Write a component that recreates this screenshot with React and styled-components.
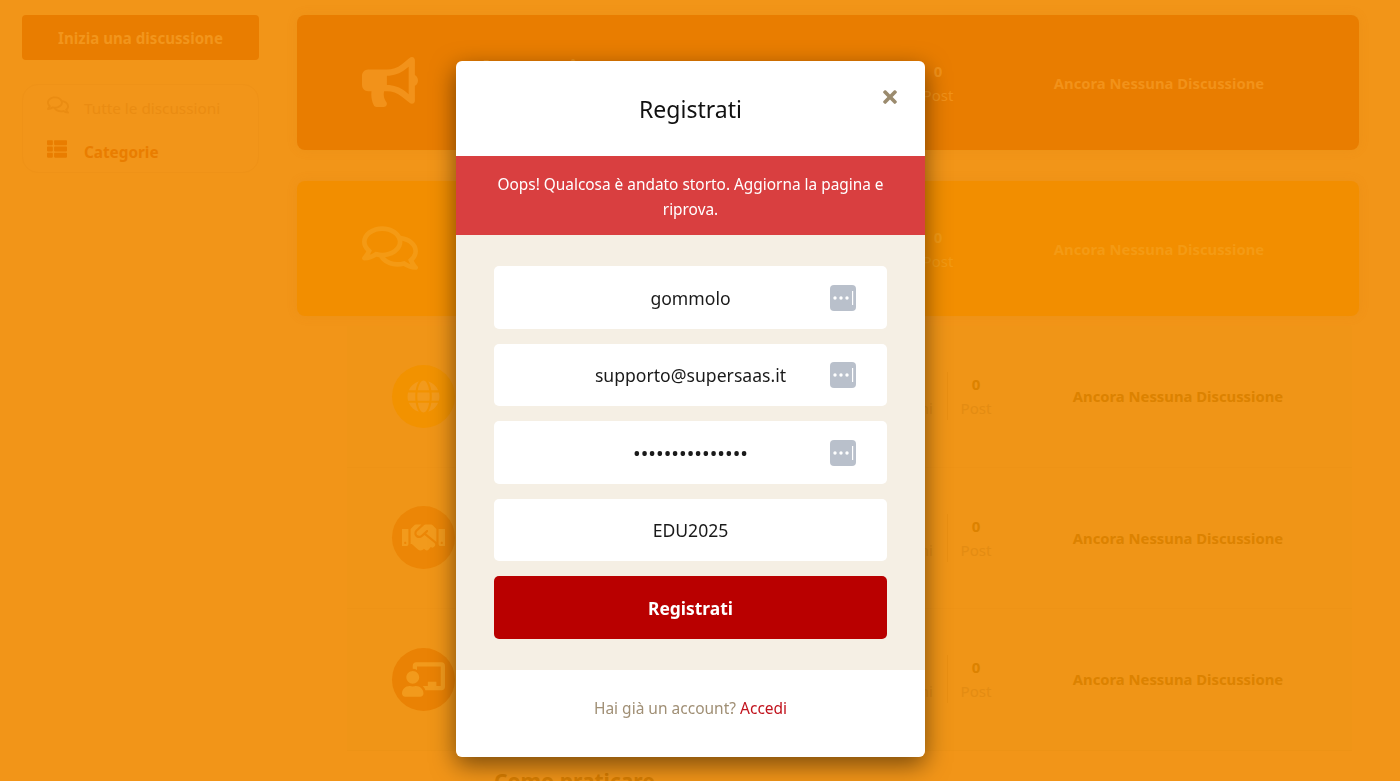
import React from 'react';
import styled, { createGlobalStyle } from 'styled-components';
import { FaBullhorn, FaRegComments, FaThList, FaGlobe, FaHandshake, FaChalkboardTeacher, FaTimes } from 'react-icons/fa';

const Global = createGlobalStyle`
  html, body { margin: 0; height: 100%; overflow: hidden; }
  body { background: #f29518; font-family: "Noto Sans", "Open Sans", sans-serif; }
  * { box-sizing: border-box; }
`;

const Page = styled.div`
  display: flex;
  gap: 38px;
  height: 781px;
  overflow: hidden;
  padding: 15px 41px 0 22px;
`;
const Sidebar = styled.aside`
  flex: 0 0 237px;
  display: flex;
  flex-direction: column;
  gap: 24px;
`;
const StartButton = styled.div`
  height: 45px;
  line-height: 47px;
  border-radius: 4px;
  background: #e97d00;
  color: #f2951c;
  font-size: 15.1px;
  font-weight: 700;
  text-align: center;
`;
const Nav = styled.nav`
  height: 89px;
  padding: 1px 24px;
  border-radius: 16px;
  border: 1px solid #ef9217;
  background: #f29519;
`;
const NavItem = styled.div`
  height: 44px;
  display: flex;
  align-items: center;
  font-size: 15.3px;
  font-weight: ${({ $active }) => ($active ? 700 : 400)};
  color: ${({ $active }) => ($active ? '#e97d00' : '#ea8c12')};
`;
const NavIcon = styled.span`
  flex: 0 0 37px;
  margin-top: -6px;
  line-height: 0;
  font-size: ${({ $size }) => $size}px;
`;

const Main = styled.main`
  flex: 1;
  display: flex;
  flex-direction: column;
`;
const Hero = styled.section`
  flex: 0 0 135px;
  display: flex;
  align-items: center;
  margin-bottom: 31px;
  padding-right: 7px;
  border-radius: 8px;
  background: ${({ $bg }) => $bg};
  color: ${({ $fg }) => $fg};
  box-shadow: 0 0 12px rgba(200, 110, 0, 0.1);
`;
const HeroIcon = styled.div`
  flex: 0 0 181px;
  padding-left: 65px;
  font-size: 56px;
  line-height: 0;
  margin-top: -1px;
`;
const HeroTitle = styled.h2`
  flex: 1;
  margin: -30px 0 0;
  font-size: 24px;
  font-weight: 700;
`;
const PostCol = styled.div`
  flex: 0 0 56px;
  text-align: center;
  font-size: 15px;
  line-height: 24px;
  b { display: block; font-size: 15px; }
`;
const Latest = styled.div`
  flex: 0 0 386px;
  text-align: center;
  font-size: 14.8px;
  font-weight: 700;
`;

const Rows = styled.div`
  margin: -21px 7px 0 50px;
  display: flex;
  flex-direction: column;
`;
const Row = styled.div`
  flex: 0 0 141.5px;
  height: 141.5px;
  display: flex;
  align-items: center;
  border-bottom: 1px solid #ee9316;
  background: #f09517;
  color: #dc8200;
`;
const Circle = styled.div`
  flex: 0 0 63px;
  height: 63px;
  margin-left: 45px;
  border-radius: 50%;
  display: flex;
  align-items: center;
  justify-content: center;
  font-size: ${({ $size }) => $size}px;
  background: ${({ $bg }) => $bg};
  color: #f29a1c;
`;
const RowBody = styled.div`
  flex: 1;
`;
const StatCol = styled.div`
  padding: 0 14px;
  height: 48px;
  text-align: center;
  font-size: 15px;
  line-height: 24px;
  color: #e48c12;
  b { display: block; color: #dc8200; }
`;
const RowPost = styled(StatCol)`
  flex: 0 0 57px;
  padding: 0;
  border-left: 1px solid #ea8f12;
`;
const RowLatest = styled.div`
  flex: 0 0 348px;
  text-align: center;
  font-size: 14.8px;
  font-weight: 700;
`;
const CutRow = styled.div`
  margin-top: 16px;
  padding-left: 147px;
  font-size: 21px;
  font-weight: 700;
  color: #d97e00;
`;

// dialog layer
const Overlay = styled.div`
  position: fixed;
  inset: 0;
  padding: 61px 19px 0 0;
  display: flex;
  justify-content: center;
  align-items: flex-start;
`;
const Modal = styled.div`
  position: relative;
  width: 469px;
  height: 696px;
  display: flex;
  flex-direction: column;
  border-radius: 6px;
  overflow: hidden;
  background: #fff;
`;
const ModalShadow = styled.div`
  border-radius: 6px;
  box-shadow: 0 8px 24px rgba(0, 0, 0, 0.5);
`;
const ModalHead = styled.header`
  flex: 0 0 95px;
  display: flex;
  align-items: center;
  justify-content: center;
  font-size: 23px;
  color: #111;
`;
const Close = styled.button`
  position: absolute;
  top: 26px;
  right: 25px;
  padding: 0;
  border: 0;
  background: none;
  line-height: 0;
  font-size: 20px;
  color: #9b8b6e;
`;
const Alert = styled.div`
  flex: 0 0 79px;
  padding: 16px 30px 0;
  background: #d93f40;
  color: #fff;
  font-size: 15.4px;
  line-height: 25px;
  text-align: center;
`;
const Body = styled.div`
  flex: 0 0 435px;
  padding: 31px 38px 0;
  background: #f5efe4;
  display: flex;
  flex-direction: column;
  gap: 15px;
`;
const Field = styled.div`
  position: relative;
  height: ${({ $h }) => $h}px;
`;
const Input = styled.input`
  width: 100%;
  height: 100%;
  padding: 0;
  border: 0;
  border-radius: 5px;
  background: #fff;
  text-align: center;
  font-family: inherit;
  font-size: ${({ type }) => (type === 'password' ? '20.4px' : '17.6px')};
  color: #1a1a1a;
  outline: none;
`;
const KeyBadge = styled.svg`
  position: absolute;
  top: 50%;
  right: 31px;
  width: 26px;
  height: 26px;
  transform: translateY(-50%);
`;
const Submit = styled.button`
  height: 63px;
  padding: 0;
  border: 0;
  border-radius: 5px;
  background: #b90000;
  color: #fff;
  font-family: inherit;
  font-size: 17.4px;
  font-weight: 700;
`;
const ModalFoot = styled.footer`
  flex: 1;
  padding-top: 26px;
  text-align: center;
  font-size: 15.5px;
  line-height: 24px;
  color: #a08f75;
  a { color: #c1121c; text-decoration: none; }
`;

const Badge = () => (
  <KeyBadge viewBox="0 0 26 26">
    <rect width="26" height="26" rx="4" fill="#b9c0cb" />
    <circle cx="5" cy="13" r="1.7" fill="#fff" />
    <circle cx="11" cy="13" r="1.7" fill="#fff" />
    <circle cx="17" cy="13" r="1.7" fill="#fff" />
    <rect x="22" y="6" width="1.2" height="14" fill="#fff" />
  </KeyBadge>
);

const ROWS = [
  { icon: FaGlobe, bg: '#f29200', size: 33 },
  { icon: FaHandshake, bg: '#ec8606', size: 43 },
  { icon: FaChalkboardTeacher, bg: '#ea8204', size: 43 },
];

const App = () => (
  <>
    <Global />
    <Page>
      <Sidebar>
        <StartButton>Inizia una discussione</StartButton>
        <Nav>
          <NavItem><NavIcon $size={22}><FaRegComments /></NavIcon>Tutte le discussioni</NavItem>
          <NavItem $active><NavIcon $size={20}><FaThList /></NavIcon>Categorie</NavItem>
        </Nav>
      </Sidebar>
      <Main>
        <Hero $bg="#e97d00" $fg="#f2921a">
          <HeroIcon><FaBullhorn /></HeroIcon>
          <HeroTitle>Annunci</HeroTitle>
          <PostCol><b>0</b>Post</PostCol>
          <Latest>Ancora Nessuna Discussione</Latest>
        </Hero>
        <Hero $bg="#f28e00" $fg="#f49a14">
          <HeroIcon><FaRegComments /></HeroIcon>
          <HeroTitle />
          <PostCol><b>0</b>Post</PostCol>
          <Latest>Ancora Nessuna Discussione</Latest>
        </Hero>
        <Rows>
          {ROWS.map(({ icon: Icon, bg, size }, i) => (
            <Row key={i}>
              <Circle $bg={bg} $size={size}><Icon /></Circle>
              <RowBody />
              <StatCol><b>0</b>Discussioni</StatCol>
              <RowPost><b>0</b>Post</RowPost>
              <RowLatest>Ancora Nessuna Discussione</RowLatest>
            </Row>
          ))}
          <CutRow>Como praticare</CutRow>
        </Rows>
      </Main>
    </Page>
    <Overlay>
      <ModalShadow>
        <Modal>
          <ModalHead>Registrati</ModalHead>
          <Close aria-label="Chiudi"><FaTimes /></Close>
          <Alert>Oops! Qualcosa è andato storto. Aggiorna la pagina e riprova.</Alert>
          <Body>
            <Field $h={63}><Input readOnly value="gommolo" /><Badge /></Field>
            <Field $h={62}><Input readOnly value="supporto@supersaas.it" /><Badge /></Field>
            <Field $h={63}><Input readOnly type="password" value="aaaaaaaaaaaaaaa" /><Badge /></Field>
            <Field $h={62}><Input readOnly value="EDU2025" /></Field>
            <Submit>Registrati</Submit>
          </Body>
          <ModalFoot>Hai già un account? <a href="#">Accedi</a></ModalFoot>
        </Modal>
      </ModalShadow>
    </Overlay>
  </>
);

export default App;
